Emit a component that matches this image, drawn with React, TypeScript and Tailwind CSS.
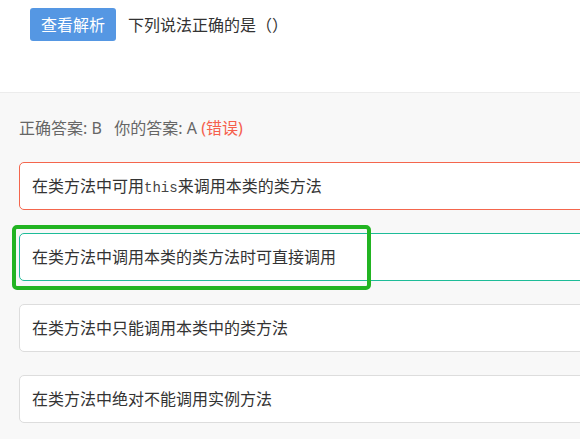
import React from "react";

const font = { fontFamily: '"Noto Sans", "Noto Sans CJK SC", sans-serif' };

function Option({ children, border }: { children: React.ReactNode; border: string }) {
  return (
    <div className={`w-[620px] h-[48px] flex items-center pl-[12px] bg-white rounded-[5px] border text-[16px] text-[#333] ${border}`}>
      <span>{children}</span>
    </div>
  );
}

export default function App() {
  return (
    <div className="w-[580px] h-[439px] overflow-hidden bg-[#f8f8f8]" style={font}>
      <div className="h-[93px] bg-white border-b border-[#ececec] pl-[30px] pt-[8px]">
        <div className="flex items-center gap-[12px]">
          <button className="w-[86px] h-[33px] rounded-[3px] bg-[#5597e3] text-white text-[16px] flex items-center justify-center">
            查看解析
          </button>
          <span className="text-[16px] text-[#333]">下列说法正确的是（）</span>
        </div>
      </div>
      <div className="pl-[19px] pt-[24px]">
        <div className="text-[16px] text-[#666] h-[22px] leading-[22px]">
          正确答案: B&nbsp;&nbsp;&nbsp;你的答案: A <span className="text-[#f5604d]">(错误)</span>
        </div>
        <div className="flex flex-col gap-[23px] mt-[23px]">
          <Option border="border-[#f4664d]">
            在类方法中可用<span className="text-[14px] text-[#444]" style={{ fontFamily: '"Liberation Mono", monospace' }}>this</span>来调用本类的类方法
          </Option>
          <div className="relative">
            <Option border="border-[#1dbc98]">在类方法中调用本类的类方法时可直接调用</Option>
            <div className="absolute left-[-7px] top-[-8px] w-[359px] h-[65px] border-4 border-[#22b422] rounded-[5px] pointer-events-none" />
          </div>
          <Option border="border-[#dddddd]">在类方法中只能调用本类中的类方法</Option>
          <Option border="border-[#dddddd]">在类方法中绝对不能调用实例方法</Option>
        </div>
      </div>
    </div>
  );
}
